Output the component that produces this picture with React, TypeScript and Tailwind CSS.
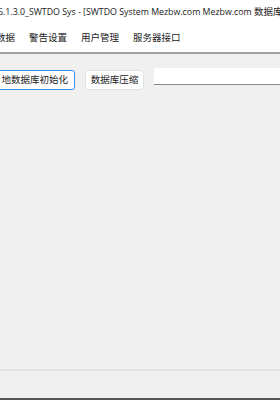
export default function App() {
  const menus = ["数据", "警告设置", "用户管理", "服务器接口"];
  return (
    <div
      className="w-[280px] h-[400px] overflow-hidden bg-[#f0f0f0] flex flex-col text-[#1a1a1a]"
      style={{ fontFamily: '"Open Sans", "Noto Sans CJK SC", sans-serif' }}
    >
      <div className="h-[24px] bg-white flex items-center whitespace-nowrap overflow-hidden">
        <span className="ml-[-2px] text-[8.8px] leading-none">
          6.1.3.0_SWTDO Sys - [SWTDO System Mezbw.com Mezbw.com <span className="text-[9.5px]">数据库初始化</span>]
        </span>
      </div>
      <div className="h-[30px] bg-white flex items-center gap-[14px] whitespace-nowrap border-b-2 border-[#a0a0a0]">
        <span className="ml-[-4px] text-[9.5px]">{menus[0]}</span>
        {menus.slice(1).map((m) => (
          <span key={m} className="text-[9.5px]">
            {m}
          </span>
        ))}
      </div>
      <div className="flex items-start mt-[14px] whitespace-nowrap">
        <button className="ml-[-6px] mt-[2px] w-[81px] h-[20px] bg-white border border-[#3b8ce8] rounded-[3px] text-[9.5px] leading-none text-right pr-[6px]">
          地数据库初始化
        </button>
        <button className="ml-[10px] mt-[2px] w-[59px] h-[20px] bg-white border border-[#e2e2e2] rounded-[3px] text-[9.5px] leading-none">
          数据库压缩
        </button>
        <div className="ml-[10px] flex-1 h-[17px] bg-white border-b border-[#8a8a8a]" />
      </div>
      <div className="flex-1" />
      <div className="h-[2px] bg-[#e3e3e3]" />
      <div className="h-[27px]" />
      <div className="h-[2px] bg-[#555]" />
    </div>
  );
}
